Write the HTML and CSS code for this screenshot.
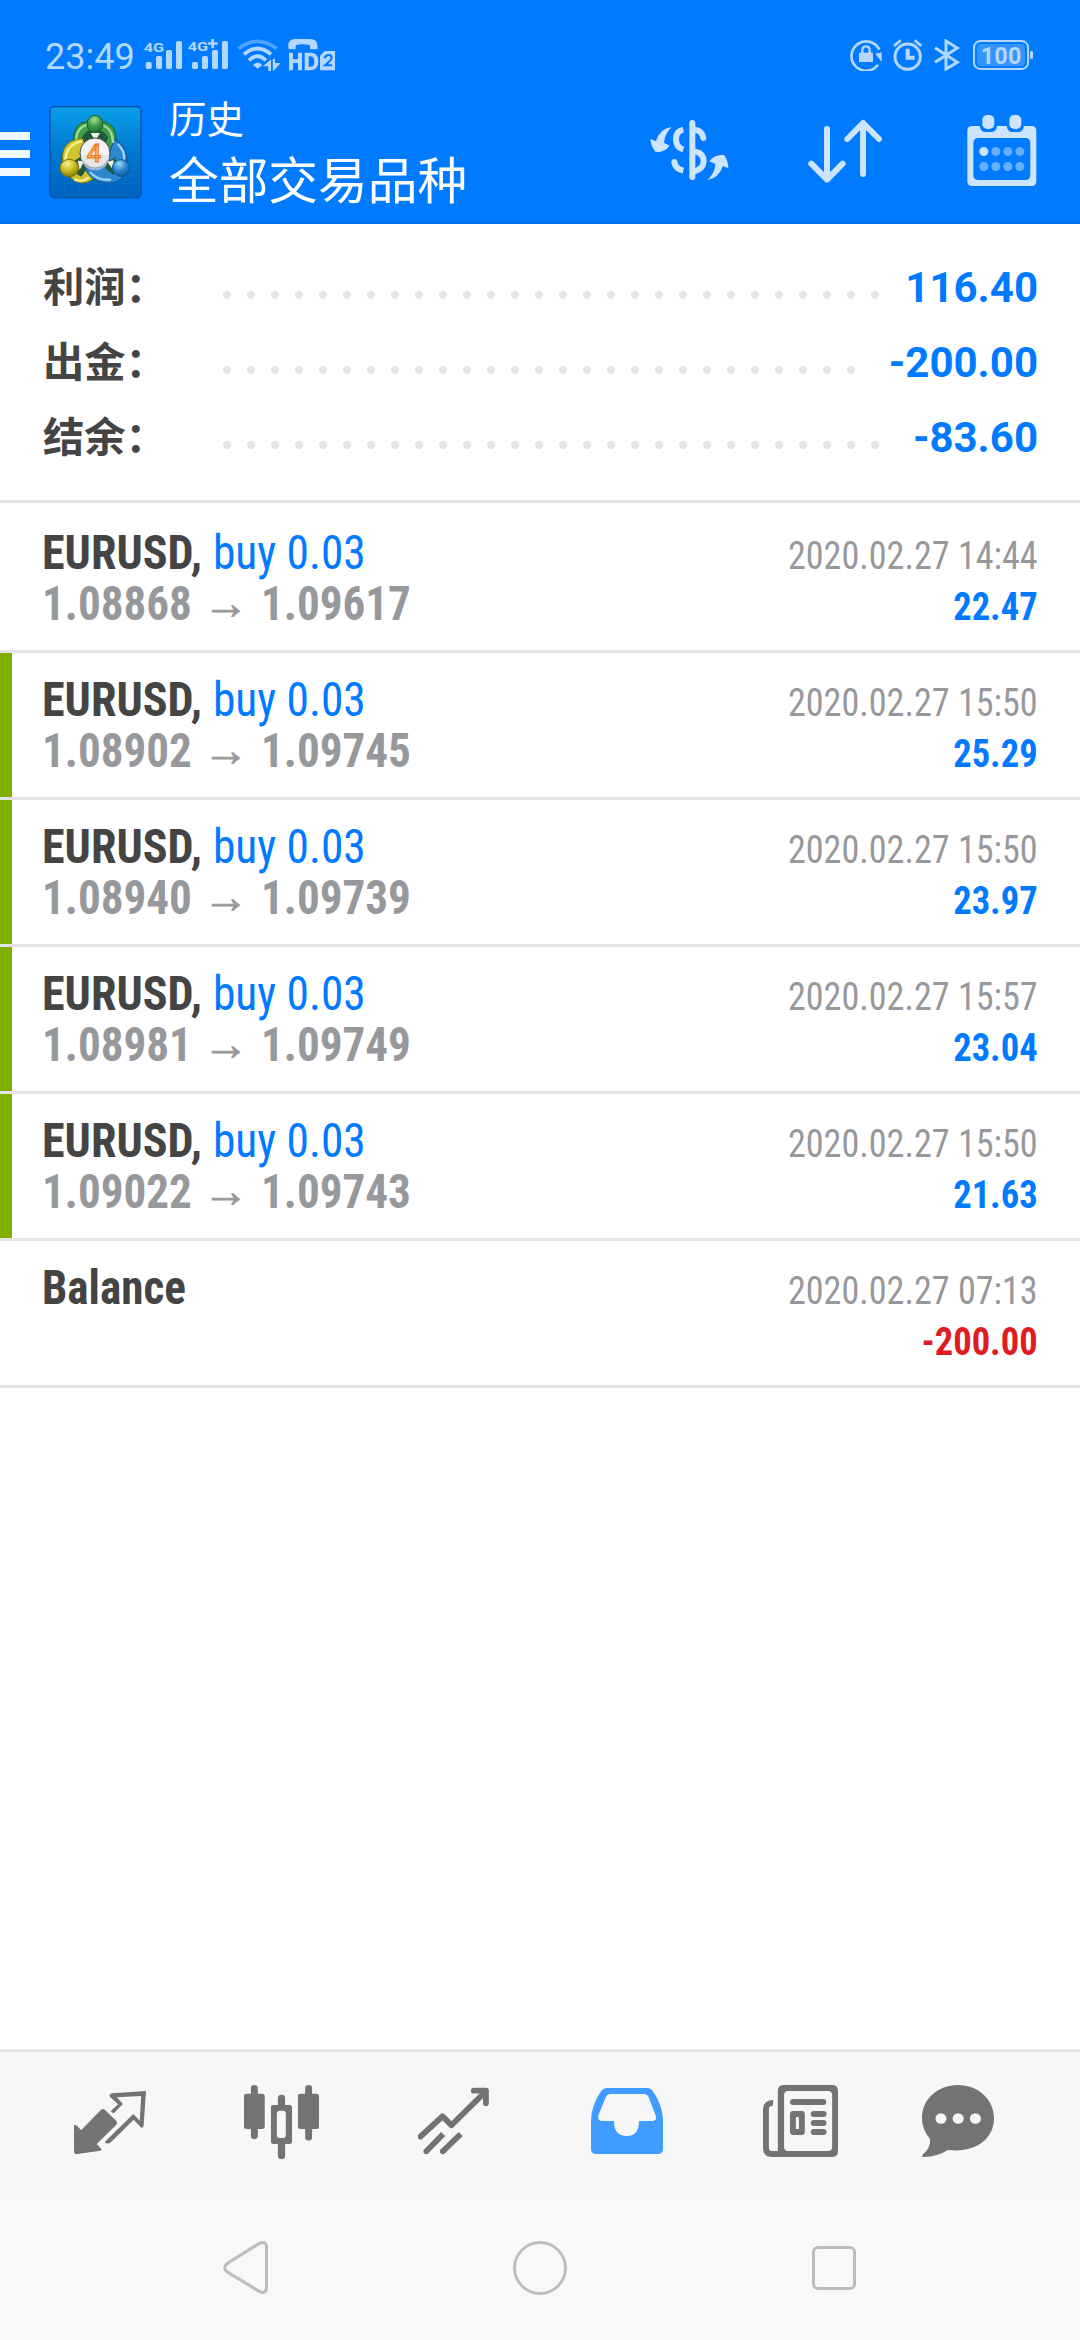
FILE: index.html
```html
<!DOCTYPE html>
<html lang="zh-CN">
<head>
<meta charset="utf-8">
<title>历史</title>
<link rel="stylesheet" href="styles.css">
</head>
<body>
<div class="screen">
  <header class="header">
    <div class="status">
      <span class="clock">23:49</span>
      <svg class="st sig1" width="38" height="32" viewBox="432 57 114 96" fill="#b3d7ff"><text x="431" y="95" font-size="41" font-weight="700" textLength="61" lengthAdjust="spacingAndGlyphs">4G</text><rect x="437" y="126" width="18" height="21" rx="5"/><rect x="468" y="108" width="18" height="39" rx="5"/><rect x="498" y="90" width="18" height="57" rx="5"/><rect x="528" y="63" width="18" height="84" rx="5"/></svg>
      <svg class="st sig2" width="40" height="32" viewBox="564 57 120 96" fill="#b3d7ff"><text x="563" y="92" font-size="41" font-weight="700" textLength="61" lengthAdjust="spacingAndGlyphs">4G</text><path d="M634 57h8v10h11v7h-11v11h-8V74h-10v-7h10z"/><rect x="576" y="126" width="18" height="21" rx="5"/><rect x="606" y="108" width="18" height="39" rx="5"/><rect x="636" y="90" width="18" height="57" rx="5"/><rect x="666" y="63" width="18" height="84" rx="5"/></svg>
      <svg class="st wifi" width="44" height="32" viewBox="712 57 132 96" fill="none" stroke="#b3d7ff"><path d="M716 86Q773 42 831 86" stroke="#4da2ff" stroke-width="11"/><path d="M733 103Q773 68 814 103M748 121Q773 96 799 121" stroke-width="11"/><path d="M760 135Q774 122 788 135L774 146zM790 139L814 118V153H806V139zM819 118L826 116V129H843L820 154z" fill="#b3d7ff" stroke="none"/></svg>
      <svg class="st" width="47" height="32" viewBox="864 57 141 96" fill="#b3d7ff"><path d="M866 88Q860 57 885 57H930Q957 57 952 88H930V76Q908 70 887 76V88z"/><path d="M867 98h12v20h15V98h12v53h-12v-22h-15v22h-12zM914 98h18q23 0 23 26t-23 27h-18zm12 11v31h5q12 0 12-15t-12-16z" fill-rule="evenodd"/><path d="M974 93H1005V151H960V107z"/><path d="M974 115q2-10 12-10 9 0 9 8 0 6-8 12l-12 11h21" fill="none" stroke="#007aff" stroke-width="6"/></svg>
      <div class="status-right">
        <svg class="st" width="32" height="32" viewBox="690 57 96 96"><path d="M774 134A44 44 0 1 1 778 89" fill="none" stroke="#b3d7ff" stroke-width="8"/><path d="M766 101L785 97V126z" fill="#b3d7ff"/><rect x="717" y="98" width="42" height="28" fill="#b3d7ff"/><path d="M727 99v-9q0-11 11-11t11 11v9" fill="none" stroke="#b3d7ff" stroke-width="7"/></svg>
        <svg class="st" width="30" height="32" viewBox="820 57 90 96" fill="none" stroke="#b3d7ff" stroke-width="9"><circle cx="864" cy="110" r="38"/><path d="M823 78L843 61M885 61L905 78" stroke-width="8"/><path d="M864 86V113H885" stroke-width="12"/></svg>
        <svg class="st" width="26" height="32" viewBox="941 57 78 96" fill="none" stroke="#b3d7ff" stroke-width="9"><path d="M944 83L1011 127L977 147V63L1011 84L944 127"/></svg>
        <svg class="st" width="60" height="32" viewBox="1056 57 180 96"><rect x="1059" y="63" width="162" height="84" rx="19" fill="none" stroke="#b3d7ff" stroke-width="6"/><rect x="1068" y="72" width="144" height="66" rx="12" fill="#3395ff"/><rect x="1227" y="93" width="9" height="24" rx="4" fill="#b3d7ff"/><text x="1079" y="131" font-size="70" font-weight="700" fill="#b3d7ff" textLength="122">100</text></svg>
      </div>
    </div>
    <div class="appbar">
      <div class="menu"><i></i><i></i><i></i></div>
      <svg class="logo" width="94" height="94" viewBox="149 255 282 282">
        <defs>
          <linearGradient id="tile" x1="0" y1="0" x2="0" y2="1"><stop offset="0" stop-color="#0a9fe8"/><stop offset=".5" stop-color="#0078d0"/><stop offset="1" stop-color="#0062bc"/></linearGradient>
          <radialGradient id="grn" cx=".45" cy=".25" r=".8"><stop offset="0" stop-color="#a5e09a"/><stop offset=".5" stop-color="#3c9c48"/><stop offset="1" stop-color="#14692b"/></radialGradient>
          <radialGradient id="yel" cx=".4" cy=".25" r=".8"><stop offset="0" stop-color="#f8f192"/><stop offset=".5" stop-color="#cabe22"/><stop offset="1" stop-color="#7e7606"/></radialGradient>
          <radialGradient id="blu" cx=".4" cy=".25" r=".8"><stop offset="0" stop-color="#9bdcfa"/><stop offset=".5" stop-color="#2b88d2"/><stop offset="1" stop-color="#0a559f"/></radialGradient>
        </defs>
        <rect x="152" y="260" width="273" height="273" rx="13" fill="url(#tile)" stroke="#03509f" stroke-width="4"/>
        <path d="M195 264V530M240 264V530M333 264V530M378 264V530M156 310H421M156 355H421M156 446H421M156 490H421" stroke="#2aa4ec" stroke-opacity=".22" stroke-width="2"/>
        <path d="M222 365Q222 309 262 305H312Q352 313 351 365Q348 400 325 420L240 385z" fill="#3f9d47" stroke="#12612a" stroke-width="3"/>
        <path d="M190 425Q183 357 255 355L300 450Q283 490 246 489Q205 484 190 425z" fill="#cfc32e" stroke="#776f0b" stroke-width="3"/>
        <path d="M345 357Q386 380 383 430Q382 490 324 490Q270 485 256 440L325 415z" fill="#2d87ce" stroke="#0b4f95" stroke-width="3"/>
        <g fill="none" stroke-linecap="round" stroke-width="7">
          <path d="M231 355Q234 320 268 313M310 315Q340 328 341 366" stroke="#a2d99b"/>
          <path d="M245 364Q202 374 198 418M227 479Q248 488 266 474" stroke="#f8f293"/>
          <path d="M357 374Q376 392 374 416M274 458Q296 482 332 479" stroke="#98d6f5"/>
        </g>
        <path d="M248 352Q258 333 275 330H300Q316 334 327 352L318 372H256zM222 425L250 405L262 448L246 470L232 462zM348 412L324 425L318 446L342 464L352 450z" fill="#205a3c"/>
        <path d="M274 339H302L292 356H284zM235 422L254 424L241 450zM324 425L343 421L340 448z" fill="#f2f5ec"/>
        <ellipse cx="287" cy="312" rx="24" ry="26" fill="url(#grn)" stroke="#155f29" stroke-width="3"/>
        <ellipse cx="210" cy="444" rx="28" ry="26" fill="url(#yel)" stroke="#78700d" stroke-width="3"/>
        <ellipse cx="365" cy="444" rx="26" ry="25" fill="url(#blu)" stroke="#0b539b" stroke-width="3"/>
        <circle cx="287" cy="399" r="45" fill="#f4f4f6" stroke="#424a50" stroke-width="3"/>
        <path d="M244 408Q288 400 330 408A43 43 0 0 1 244 408z" fill="#dcdde4" opacity=".6"/>
        <text x="284" y="426" text-anchor="middle" font-size="79" font-weight="500" fill="#ffb24a" stroke="#e8742a" stroke-width="2.500">4</text>
      </svg>
      <div class="titles"><div class="t1">历史</div><div class="t2">全部交易品种</div></div>
      <div class="actions">
        <svg width="79" height="71" viewBox="92 285 237 213" fill="none" stroke="#cce4ff" stroke-linecap="round" stroke-width="18"><path d="M219 309V471"/><path d="M228 329Q248 332 252 354M228 395Q253 400 253 424Q252 445 228 453"/><g stroke-linecap="butt"><path d="M192 329Q170 333 170 358Q170 382 192 389"/><path d="M192 452Q169 447 165 427"/></g><circle cx="165" cy="426" r="9" fill="#cce4ff" stroke="none"/><path d="M157 321Q136 341 134 368L151 377Q136 397 109 396Q96 382 93 357Q102 360 110 364Q120 326 157 321zM264 480Q288 458 288 432L270 424Q286 402 314 405Q327 422 327 445L311 438Q298 475 264 480z" fill="#cce4ff" stroke="none"/></svg>
        <svg class="sort" width="75" height="71" viewBox="567 285 225 213" fill="none" stroke="#cce4ff" stroke-width="18" stroke-linecap="round" stroke-linejoin="round"><path d="M624 327V478M577 431L624 479L671 431M732 462V310M685 357L732 309L780 357"/></svg>
        <svg class="cal" width="70" height="71" viewBox="1043 285 210 213"><path d="M1058 318H1081Q1084 336 1098 336H1116Q1130 336 1133 318H1162Q1165 336 1179 336H1197Q1211 336 1214 318H1237Q1251 318 1251 332V484Q1251 498 1237 498H1058Q1044 498 1044 484V332Q1044 318 1058 318zM1078 354Q1062 354 1062 370V464Q1062 480 1078 480H1217Q1233 480 1233 464V370Q1233 354 1217 354z" fill="#cce4ff" fill-rule="evenodd"/><rect x="1089" y="285" width="36" height="42" rx="15" fill="#cce4ff"/><rect x="1170" y="285" width="36" height="42" rx="15" fill="#cce4ff"/><circle cx="1093.500" cy="394.500" r="13.500" fill="#cce4ff"/><g fill="#66afff"><circle cx="1129.500" cy="394.500" r="13.500"/><circle cx="1165.500" cy="394.500" r="13.500"/><circle cx="1201.500" cy="394.500" r="13.500"/><circle cx="1093.500" cy="439.500" r="13.500"/><circle cx="1129.500" cy="439.500" r="13.500"/><circle cx="1165.500" cy="439.500" r="13.500"/><circle cx="1201.500" cy="439.500" r="13.500"/></g></svg>
      </div>
    </div>
  </header>

  <section class="summary">
    <div class="sum"><span class="label">利润：</span><span class="dots"></span><span class="amount">116.40</span></div>
    <div class="sum"><span class="label">出金：</span><span class="dots"></span><span class="amount">-200.00</span></div>
    <div class="sum"><span class="label">结余：</span><span class="dots"></span><span class="amount">-83.60</span></div>
  </section>

  <main class="list">
    <div class="deal"><div class="left"><div class="sym"><b>EURUSD,</b><span class="buy">buy 0.03</span></div><div class="price"><span>1.08868</span><span class="arr">→</span><span>1.09617</span></div></div><div class="right"><div class="date">2020.02.27 14:44</div><div class="profit">22.47</div></div></div>
    <div class="deal tp"><div class="left"><div class="sym"><b>EURUSD,</b><span class="buy">buy 0.03</span></div><div class="price"><span>1.08902</span><span class="arr">→</span><span>1.09745</span></div></div><div class="right"><div class="date">2020.02.27 15:50</div><div class="profit">25.29</div></div></div>
    <div class="deal tp"><div class="left"><div class="sym"><b>EURUSD,</b><span class="buy">buy 0.03</span></div><div class="price"><span>1.08940</span><span class="arr">→</span><span>1.09739</span></div></div><div class="right"><div class="date">2020.02.27 15:50</div><div class="profit">23.97</div></div></div>
    <div class="deal tp"><div class="left"><div class="sym"><b>EURUSD,</b><span class="buy">buy 0.03</span></div><div class="price"><span>1.08981</span><span class="arr">→</span><span>1.09749</span></div></div><div class="right"><div class="date">2020.02.27 15:57</div><div class="profit">23.04</div></div></div>
    <div class="deal tp"><div class="left"><div class="sym"><b>EURUSD,</b><span class="buy">buy 0.03</span></div><div class="price"><span>1.09022</span><span class="arr">→</span><span>1.09743</span></div></div><div class="right"><div class="date">2020.02.27 15:50</div><div class="profit">21.63</div></div></div>
    <div class="deal"><div class="left"><div class="sym balance"><b>Balance</b></div></div><div class="right"><div class="date">2020.02.27 07:13</div><div class="profit loss">-200.00</div></div></div>
  </main>

  <nav class="tabs">
    <svg width="72" height="74" viewBox="215 165 209 222" preserveAspectRatio="none"><path d="M215 286Q219 283 223 287L236 300L293 240Q299 234 305 240L338 273Q342 278 338 284L281 342L294 356Q297 360 291 362L225 372Q215 373 215 362z" fill="#737373"/><path d="M318 196Q318 191 325 190L424 183L417 288Q416 295 409 292L388 269L322 337Q317 342 306 339L305 335L387 252L406 272L410 198L339 202L357 222L332 248Q327 251 322 243L343 223L320 201Q318 199 318 196z" fill="#737373"/></svg>
    <svg width="75" height="74" viewBox="709 165 217 222" preserveAspectRatio="none" fill="#737373"><rect x="729" y="165" width="20" height="162" rx="10"/><rect x="709" y="191" width="60" height="106" rx="7"/><rect x="886" y="165" width="20" height="167" rx="10"/><rect x="865" y="191" width="61" height="106" rx="7"/><rect x="807" y="194" width="21" height="40" rx="10"/><rect x="807" y="335" width="21" height="52" rx="10"/><path d="M794 225H841Q848 225 848 233V334Q848 342 841 342H794Q787 342 787 334V233Q787 225 794 225zM812 242Q804 242 804 252V315Q804 324 812 324H822Q830 324 830 315V252Q830 242 822 242z" fill-rule="evenodd"/></svg>
    <svg width="71" height="74" viewBox="1214 165 206 222" preserveAspectRatio="none" fill="none" stroke="#737373" stroke-width="17" stroke-linejoin="round" stroke-linecap="round"><path d="M1221 320L1285 259L1311 286L1405 190"/><path d="M1376 182H1411V220"/><path d="M1238 364L1287 312M1286 364L1338 312" stroke-linecap="butt"/><path d="M1238 364h.1M1286 364h.1"/></svg>
    <svg width="72" height="74" viewBox="148 165 209 222" preserveAspectRatio="none"><path d="M194 174H313Q321 174 327 182Q356 225 357 270V358Q357 372 342 372H163Q148 372 148 358V270Q149 225 178 182Q184 174 194 174zM206 192Q195 192 191 201L169 257Q167 273 181 273H215Q214 318 252 318Q288 318 287 273H325Q340 273 336 257L316 203Q312 192 299 192z" fill="#409cff" fill-rule="evenodd"/></svg>
    <svg width="75" height="74" viewBox="648 165 217 222" preserveAspectRatio="none" fill="#737373"><path d="M708 165H848Q865 165 865 182V364Q865 381 848 381H672Q648 380 648 354V236Q650 210 678 210L676 227Q665 228 665 236V352Q665 363 674 363H691V182Q691 165 708 165zM721 183Q709 183 709 195V351Q709 363 721 363H836Q848 363 848 351V195Q848 183 836 183z" fill-rule="evenodd"/><rect x="726" y="207" width="105" height="18" rx="9"/><path d="M736 243H760Q769 243 769 252V306Q769 315 760 315H736Q726 315 726 306V252Q726 243 736 243zM743 261V297H752V261z" fill-rule="evenodd"/><rect x="786" y="243" width="46" height="18" rx="9"/><rect x="786" y="270" width="46" height="18" rx="9"/><rect x="786" y="297" width="46" height="18" rx="9"/></svg>
    <svg width="72" height="74" viewBox="1109 165 209 222" preserveAspectRatio="none"><path d="M1213 165C1273 165 1318 209 1318 265C1318 328 1263 370 1184 360Q1150 382 1113 381Q1107 379 1112 373Q1133 356 1133 328Q1109 300 1109 264C1109 208 1155 165 1213 165z" fill="#737373"/><g fill="#f7f7f7"><circle cx="1164" cy="265.500" r="16"/><circle cx="1214" cy="265.500" r="16"/><circle cx="1264" cy="265.500" r="16"/></g></svg>
  </nav>
  <div class="sysnav">
    <svg width="46" height="54" viewBox="0 0 46 54"><path d="M35.500 2.800Q43.500 -1 43.500 6.500V46Q43.500 53.500 36.500 50.500L3.500 30.500Q0 27 3.500 23z" fill="none" stroke="#bdbdbd" stroke-width="3"/></svg>
    <i class="circle"></i><i class="square"></i>
  </div>
</div>
</body>
</html>
```
FILE: styles.css
```css
* { box-sizing: border-box; }
body { margin: 0; background: #fff; font-family: Roboto, "Noto Sans CJK SC", sans-serif; }
svg { display: block; flex: none; }
.screen { width: 1080px; height: 2340px; display: flex; flex-direction: column; overflow: hidden; }

.header { height: 224px; background: #007aff; border-bottom: 3px solid #0070ea; color: #fff; }
.status { height: 86px; padding: 39px 47px 0 45px; display: flex; align-items: flex-start; }
.clock { width: 99px; font-size: 36px; line-height: 36px; font-weight: 450; color: #b3d7ff; white-space: nowrap; }
.sig1 { margin-right: 6px; }
.sig2 { margin-right: 9px; }
.wifi { margin-right: 7px; }
.status-right { margin-left: auto; display: flex; gap: 11px; }
.status-right .st:last-child { margin-left: 2px; }

.appbar { height: 135px; display: flex; align-items: flex-start; padding-right: 43px; }
.menu { width: 30px; margin: 46px 20px 0 0; display: grid; gap: 10px; }
.menu i { height: 8px; background: #f2f8ff; }
.logo { margin: 19px 1px 0 -1px; }
.titles { margin-left: 25px; white-space: nowrap; font-family: "Noto Sans CJK SC", sans-serif; }
.t1 { font-size: 37.5px; line-height: 38px; margin-top: 12px; }
.t2 { font-size: 49.7px; line-height: 50px; margin-top: 16px; }
.actions { margin: 29px 0 0 auto; display: flex; }
.sort { margin-left: 79px; }
.cal { margin-left: 84px; }

.summary { height: 279px; padding: 26px 42px 0 43px; border-bottom: 3px solid #e5e5e5; }
.sum { height: 75px; display: flex; align-items: center; font-weight: 700; font-size: 42px; line-height: 75px; white-space: nowrap; }
.label { width: 172px; height: 75px; line-height: 69px; color: #444; font-family: "Noto Sans CJK SC", sans-serif; font-size: 41.3px; font-weight: 700; }
.dots { flex: 1; height: 8px; margin: 15px 21px 0 0; background: radial-gradient(circle at 12px 4px, #e5e5e5 3.700px, transparent 4.300px) 0 0 / 24px 8px repeat-x; }
.amount { color: #007aff; }

.list { flex: 1; padding-top: 3px; font-family: "Roboto Condensed", Roboto, sans-serif; font-stretch: 75%; }
.deal { height: 147px; padding: 21px 42px 0 42px; border-bottom: 3px solid #e5e5e5; display: flex; justify-content: space-between; white-space: nowrap; }
.tp { background: linear-gradient(#7fb000, #7fb000) 0 0 / 12px 100% no-repeat; }
.sym { display: grid; grid-template-columns: 171px auto; font-size: 48px; line-height: 51px; color: #444; }
.sym b { transform: scaleX(.96); transform-origin: 0 50%; }
.balance b { transform: scaleX(.94); }
.buy { color: #007aff; transform: scaleX(.945); transform-origin: 0 50%; }
.price { display: grid; grid-template-columns: 165px 54px auto; font-size: 48px; line-height: 52px; font-weight: 700; color: #97989b; }
.price span { transform: scaleX(.94); transform-origin: 0 50%; }
.price .arr { font-family: "Liberation Sans", sans-serif; font-size: 46px; font-weight: 400; -webkit-text-stroke: .8px #97989b; transform: translate(-4px, -1px); }
.right { text-align: right; font-size: 39px; }
.date { line-height: 52px; color: #97989b; margin-top: 3px; transform: scaleX(.926); transform-origin: 100% 50%; }
.profit { line-height: 51px; font-weight: 700; color: #007aff; transform: scaleX(.937); transform-origin: 100% 50%; }
.loss { color: #e01b22; }

.tabs { height: 147px; border-top: 3px solid #e4e4e4; background: #f7f7f7; padding: 33px 51px 0 24px; display: grid; grid-template-columns: 172px 171.500px 172.500px 174px 173px 142px; justify-items: center; }
.sysnav { height: 144px; background: #f8f8f8; display: flex; padding: 45px 0 0 223px; align-items: flex-start; }
.circle { width: 54px; height: 54px; border: 3px solid #bdbdbd; border-radius: 50%; margin-left: 244px; }
.square { width: 44px; height: 44px; border: 3px solid #bdbdbd; border-radius: 6px; margin: 5px 0 0 245px; }
```
